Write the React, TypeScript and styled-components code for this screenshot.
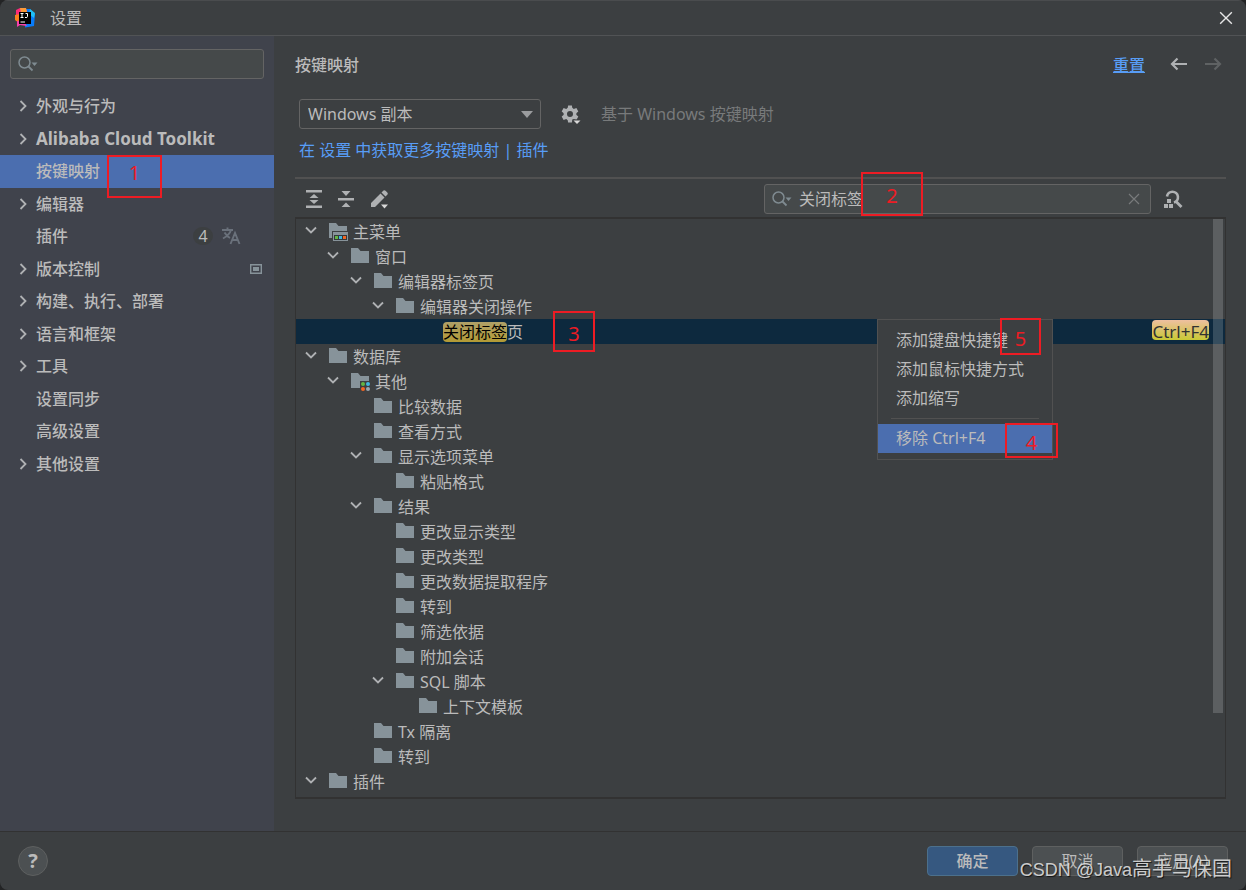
import React from "react";
import styled, { createGlobalStyle, css } from "styled-components";

const color = {
  panel: "#3c3f41",
  sidebar: "#40434c",
  text: "#bbbbbb",
  muted: "#787a7b",
  link: "#589df6",
  selection: "#4b6eaf",
  rowSelection: "#0d293e",
  field: "#45494a",
  fieldBorder: "#646464",
  line: "#323232",
  mark: "#ed1c24",
  folder: "#87939a",
  icon: "#afb1b3",
};

const GlobalStyle = createGlobalStyle`
  *, *::before, *::after { box-sizing: border-box; }
  body { margin: 0; background: #232425; }
  body, button, input, select {
    font-family: "Noto Sans", "Noto Sans CJK SC", sans-serif;
    font-size: 16px;
    line-height: 24px;
    color: ${color.text};
  }
  ul { list-style: none; margin: 0; padding: 0; }
`;

const Window = styled.div`
  position: relative;
  display: flex;
  flex-direction: column;
  min-height: 100vh;
  background: ${color.panel};
  border-radius: 8px;
  overflow: hidden;
`;

const TitleBar = styled.header`
  display: flex;
  align-items: center;
  gap: 15px;
  height: 36px;
  padding: 0 13px 0 15px;
  border-top: 1px solid #4a4c4e;
  border-bottom: 1px solid #515355;
`;

const TitleText = styled.span`
  flex: 1;
`;

const IconButton = styled.button`
  display: flex;
  align-items: center;
  justify-content: center;
  flex: none;
  padding: 0;
  border: 0;
  background: none;
`;

const Body = styled.div`
  display: flex;
  flex: 1;
`;

const Sidebar = styled.nav`
  flex: none;
  width: 274px;
  padding-top: 13px;
  background: ${color.sidebar};
`;

const SearchBox = styled.label<{ $inset?: boolean }>`
  position: relative;
  display: flex;
  align-items: center;
  height: 30px;
  padding: 0 ${(p) => (p.$inset ? 8 : 10)}px 0 6px;
  border: 1px solid ${color.fieldBorder};
  border-radius: 3px;
  background: ${color.field};
  ${(p) =>
    p.$inset
      ? css`
          margin: 0 10px 11px;
        `
      : css`
          width: 387px;
        `}
`;

const SearchInput = styled.input`
  flex: 1;
  min-width: 0;
  height: 24px;
  padding: 0 0 0 6px;
  border: 0;
  outline: 0;
  background: none;
`;

const Categories = styled.ul`
  display: grid;
  grid-template-rows: repeat(12, 1fr);
  height: 390px;
`;

const Category = styled.li<{ $selected?: boolean }>`
  position: relative;
  display: flex;
  align-items: center;
  padding: 0 12px 0 16px;
  font-weight: 500;
  background: ${(p) => (p.$selected ? color.selection : "none")};
`;

const ArrowSlot = styled.span`
  display: flex;
  flex: none;
  width: 20px;
`;

const CategoryName = styled.span<{ $bold?: boolean }>`
  flex: 1;
  font-size: ${(p) => (p.$bold ? 17 : 16)}px;
  font-weight: ${(p) => (p.$bold ? 700 : 500)};
`;

const CountBadge = styled.span`
  display: flex;
  align-items: center;
  justify-content: center;
  width: 20px;
  height: 18px;
  margin-right: 8px;
  border-radius: 9px;
  background: ${color.panel};
  font-weight: 400;
`;

const TranslateSlot = styled.span`
  display: flex;
  margin-right: 21px;
`;

const Main = styled.main`
  display: flex;
  flex: 1;
  flex-direction: column;
  min-width: 0;
  padding: 16px 20px 32px 21px;
`;

const HeadingRow = styled.div`
  display: flex;
  align-items: center;
  height: 26px;
`;

const Heading = styled.h1`
  flex: 1;
  margin: 0;
  font-size: 16px;
  font-weight: 500;
`;

const ResetLink = styled.a`
  color: ${color.link};
  font-weight: 500;
  margin-right: 24px;
`;

const HistoryButtons = styled.div`
  display: flex;
  gap: 14px;
  margin-right: 3px;
  padding-bottom: 2px;
`;

const SchemeRow = styled.div`
  display: flex;
  align-items: center;
  gap: 20px;
  margin: 21px 0 9px 4px;
`;

const SelectWrap = styled.div`
  position: relative;
  width: 242px;
  height: 30px;
`;

const SchemeSelect = styled.select`
  appearance: none;
  width: 100%;
  height: 100%;
  padding: 0 28px 0 8px;
  border: 1px solid ${color.fieldBorder};
  border-radius: 3px;
  background: ${color.panel};
`;

const SelectArrow = styled.svg`
  position: absolute;
  right: 8px;
  top: 12px;
  pointer-events: none;
`;

const SchemeNote = styled.span`
  color: ${color.muted};
`;

const LinkRow = styled.div`
  margin-left: 4px;
  color: ${color.link};
`;

const Link = styled.a`
  color: ${color.link};
  text-decoration: none;
`;

const Toolbar = styled.div`
  display: flex;
  align-items: center;
  gap: 12px;
  height: 40px;
  margin-top: 15px;
  padding: 2px 43px 0 9px;
  border-top: 2px solid #515151;
`;

const ToolbarActions = styled.div`
  display: flex;
  flex: 1;
  gap: 12px;
`;

const TreePanel = styled.div`
  position: relative;
  flex: 1;
  border: 1px solid #323232;
  border-top-width: 2px;
  border-bottom-width: 2px;
`;

const indents = [0, 22, 45, 67, 90];

const TreeRow = styled.li<{ $level: number; $selected?: boolean }>`
  position: relative;
  display: flex;
  align-items: center;
  height: 25px;
  padding-left: ${(p) => 9 + indents[p.$level]}px;
  padding-right: 16px;
  background: ${(p) => (p.$selected ? color.rowSelection : "none")};
`;

const TreeArrow = styled.span`
  display: flex;
  width: 23px;
  padding-bottom: 3px;
`;

const TreeIcon = styled.span`
  display: flex;
  width: 25px;
  padding-bottom: 1px;
`;

const TreeLabel = styled.span<{ $bare?: boolean }>`
  flex: 1;
  white-space: nowrap;
  margin-left: ${(p) => (p.$bare ? 25 : 0)}px;
`;

const Match = styled.mark`
  display: inline-block;
  height: 20px;
  line-height: 20px;
  color: #000;
  border-radius: 4px;
  background: linear-gradient(#aea068, #b39a35);
`;

const Shortcut = styled.kbd`
  height: 20px;
  margin-bottom: 3px;
  line-height: 23px;
  font-family: inherit;
  font-size: 17px;
  color: #323232;
  border-radius: 4px;
  background: linear-gradient(#eebfa0, #c8c834);
`;

const ScrollThumb = styled.div`
  position: absolute;
  top: 0;
  right: 2px;
  width: 10px;
  height: 494px;
  background: rgba(255, 255, 255, 0.17);
`;

const ContextMenu = styled.ul`
  position: absolute;
  z-index: 2;
  top: 0;
  right: 172px;
  width: 176px;
  padding: 6px 0;
  border: 1px solid #515151;
  background: ${color.panel};
`;

const MenuItem = styled.li<{ $selected?: boolean }>`
  position: relative;
  background: ${(p) => (p.$selected ? color.selection : "none")};
`;

const MenuButton = styled.button`
  display: block;
  width: 100%;
  height: 29px;
  padding: 0 0 2px 18px;
  border: 0;
  background: none;
  text-align: left;
  white-space: nowrap;
`;

const MenuDivider = styled.li`
  height: 1px;
  margin: 5px 13px;
  background: #515151;
`;

const Mark = styled.span<{ $x: number; $y: number; $w: number; $h: number }>`
  position: absolute;
  z-index: 3;
  left: ${(p) => p.$x}px;
  top: ${(p) => p.$y}px;
  width: ${(p) => p.$w}px;
  height: ${(p) => p.$h}px;
  display: flex;
  align-items: center;
  justify-content: center;
  border: 2px solid ${color.mark};
  color: ${color.mark};
  font-size: 20px;
  font-weight: 400;
  pointer-events: none;
`;

const MarkDigit = styled.span<{ $raised?: boolean }>`
  margin-bottom: ${(p) => (p.$raised ? 8 : 0)}px;
  margin-top: ${(p) => (p.$raised ? 0 : 4)}px;
`;

const Footer = styled.footer`
  display: flex;
  align-items: center;
  gap: 14px;
  height: 59px;
  padding: 0 18px;
  border-top: 1px solid #323232;
`;

const HelpButton = styled.button`
  width: 30px;
  height: 30px;
  margin-right: auto;
  padding: 0;
  border: 1px solid #5e6060;
  border-radius: 50%;
  background: #4c5052;
  font-size: 20px;
  font-weight: 700;
`;

const DialogButton = styled.button<{ $primary?: boolean }>`
  width: 91px;
  height: 30px;
  padding: 0;
  border: 1px solid ${(p) => (p.$primary ? "#4c708c" : "#5e6060")};
  border-radius: 4px;
  background: ${(p) => (p.$primary ? "#365880" : "#4c5052")};
  font-weight: ${(p) => (p.$primary ? 500 : 400)};
`;

const Watermark = styled.span`
  position: absolute;
  right: 14px;
  bottom: 8px;
  font-family: "Liberation Sans", "Noto Sans CJK SC", sans-serif;
  font-size: 20px;
  color: rgba(225, 225, 225, 0.9);
  text-shadow: 1px 1px 1px rgba(0, 0, 0, 0.7);
  pointer-events: none;
`;

const WatermarkLatin = styled.span`
  font-size: 18px;
`;

const AppLogo = () => (
  <svg width="20" height="20" viewBox="0 0 20 20" aria-hidden="true">
    <path d="M11 1l4 0 5 5-1 12-9 1.500 0-9z" fill="#087cfa" />
    <path d="M15 1l5 4-1 5-5-4z" fill="#20c0f5" />
    <path d="M1 2l4-2 7 2-3 8-8-2z" fill="#fe2a78" />
    <path d="M5 0l6 0 1 4-6 1z" fill="#fc9a38" />
    <path d="M0 7l5-1 3 6-4 3-4-3z" fill="#fc801d" />
    <path d="M2 13l6-1 4 6-7-1-3 2z" fill="#f83faa" />
    <rect x="4" y="4" width="12" height="12" fill="#000" />
    <path d="M5.500 5.500h3M7 5.500v4M5.500 9.500h3M12.500 5.500v3q0 1.500-2.500 1M10.500 5.500h2" stroke="#fff" strokeWidth="1" fill="none" />
    <path d="M5.500 14h4.500" stroke="#fff" strokeWidth="1" />
  </svg>
);

const CloseIcon = ({ size, stroke }: { size: number; stroke: string }) => (
  <svg width={size} height={size} viewBox="0 0 12 12" aria-hidden="true">
    <path d="M1 1l10 10M11 1L1 11" stroke={stroke} strokeWidth="1.200" />
  </svg>
);

const SearchIcon = () => (
  <svg width="22" height="20" viewBox="0 0 22 20" aria-hidden="true">
    <circle cx="7.500" cy="8.500" r="5.500" fill="none" stroke="#7f8b91" strokeWidth="1.500" />
    <path d="M11.500 12.500l4 4" stroke="#7f8b91" strokeWidth="1.800" />
    <path d="M14.500 8.500h6l-3 3.500z" fill="#7f8b91" />
  </svg>
);

const ChevronRight = () => (
  <svg width="14" height="14" viewBox="0 0 14 14" aria-hidden="true">
    <path d="M4.500 2l5 5-5 5" fill="none" stroke={color.icon} strokeWidth="1.800" />
  </svg>
);

const ChevronDown = () => (
  <svg width="12" height="12" viewBox="0 0 12 12" aria-hidden="true">
    <path d="M1 3.500l5 5 5-5" fill="none" stroke={color.icon} strokeWidth="1.800" />
  </svg>
);

type FolderKind = "plain" | "menu" | "group";

const FolderIcon = ({ kind }: { kind: FolderKind }) => (
  <svg width="20" height="20" viewBox="0 0 20 20" aria-hidden="true">
    {kind === "plain" && <path d="M1 2h7l2.500 3H19v12H1z" fill={color.folder} />}
    {kind === "menu" && (
      <>
        <path d="M1 2h7l2.500 3H19v5H4v7H1z" fill={color.folder} />
        <path d="M5 11h15v9H5z" fill={color.folder} />
        <path d="M6 14h13v5H6z" fill="#33383b" />
        <rect x="7" y="15" width="3" height="3" fill="#62b543" />
        <rect x="11" y="15" width="3" height="3" fill="#40b6e0" />
        <rect x="15" y="15" width="3" height="3" fill="#f26522" />
      </>
    )}
    {kind === "group" && (
      <>
        <path d="M1 2h7l2.500 3H19v5h-9v7H1z" fill={color.folder} />
        <circle cx="13" cy="13" r="2" fill="#62b543" />
        <circle cx="18" cy="13" r="2" fill="#40b6e0" />
        <circle cx="13" cy="18" r="2" fill="#f26522" />
        <circle cx="18" cy="18" r="2" fill="#9aa7b0" />
      </>
    )}
  </svg>
);

const ArrowIcon = ({ right }: { right?: boolean }) => (
  <svg width="20" height="20" viewBox="0 0 20 20" aria-hidden="true">
    <path
      d={right ? "M2 10h15M11.500 4.500l5.500 5.500-5.500 5.500" : "M18 10H3M8.500 4.500L3 10l5.500 5.500"}
      fill="none"
      stroke={right ? "#5f6263" : color.icon}
      strokeWidth="2.200"
    />
  </svg>
);

const GearIcon = () => (
  <svg width="20" height="20" viewBox="0 0 20 20" aria-hidden="true">
    <circle cx="9" cy="10" r="4.700" fill="none" stroke={color.icon} strokeWidth="3.400" />
    {[0, 60, 120].map((a) => (
      <path
        key={a}
        d="M6.500 5l.6-3.500h3.800l.6 3.500zM6.500 15l.6 3.500h3.800l.6-3.500z"
        fill={color.icon}
        transform={`rotate(${a} 9 10)`}
      />
    ))}
    <path d="M11 15.500h9V20h-6z" fill={color.panel} />
    <path d="M12.500 16.500h7l-3.500 3.500z" fill="#d8d8d8" />
  </svg>
);

const ExpandIcon = () => (
  <svg width="20" height="20" viewBox="0 0 20 20" aria-hidden="true">
    <path d="M2 1h16v2.500H2zM2 16.500h16V19H2zM10 5l4.500 4h-9zM10 15l4.500-4h-9z" fill={color.icon} />
  </svg>
);

const CollapseIcon = () => (
  <svg width="20" height="20" viewBox="0 0 20 20" aria-hidden="true">
    <path d="M2 9h16v2.500H2zM10 7l4.500-5h-9zM10 13.500l4.500 4.500h-9z" fill={color.icon} />
  </svg>
);

const EditIcon = () => (
  <svg width="22" height="20" viewBox="0 0 22 20" aria-hidden="true">
    <path d="M3 14L12.500 4.500l4 4L7 18H3zM13.500 3.500l2-2q1-.8 2 .2l1.800 1.800q1 1 .2 2l-2 2z" fill={color.icon} />
    <path d="M10.500 15H20l-4.800 5z" fill={color.panel} />
    <path d="M13 15.500h7l-3.500 4z" fill="#d8d8d8" />
  </svg>
);

const FindShortcutIcon = () => (
  <svg width="20" height="20" viewBox="0 0 20 20" aria-hidden="true">
    <path d="M4 7.500a5.500 5.500 0 1 1 7 6" fill="none" stroke={color.icon} strokeWidth="2.600" />
    <path d="M12.500 12l6 6" stroke={color.icon} strokeWidth="2.800" />
    <path d="M4 10h4v4H4zM1 15h4v4H1zM6 15h4v4H6z" fill={color.icon} />
  </svg>
);

const TranslateIcon = () => (
  <svg width="20" height="20" viewBox="0 0 20 20" aria-hidden="true">
    <path
      d="M1 4h11M6.500 1.500V4M10 4Q8.500 9 2 12.500M3.500 6.500Q6 10.500 9 12M9.500 18l4.500-11 4.500 11M11 14h6"
      fill="none"
      stroke="#6a717b"
      strokeWidth="1.900"
    />
  </svg>
);

const ProjectIcon = () => (
  <svg width="12" height="10" viewBox="0 0 12 10" aria-hidden="true">
    <path d="M.7.700h10.600v8.600H.7z" fill="none" stroke="#87939a" strokeWidth="1.400" />
    <path d="M3 3h6v4H3z" fill="#87939a" />
  </svg>
);

type CategoryData = { name: string; leaf?: boolean; bold?: boolean; selected?: boolean; plugins?: boolean; project?: boolean };

const categories: CategoryData[] = [
  { name: "外观与行为" },
  { name: "Alibaba Cloud Toolkit", bold: true },
  { name: "按键映射", leaf: true, selected: true },
  { name: "编辑器" },
  { name: "插件", leaf: true, plugins: true },
  { name: "版本控制", project: true },
  { name: "构建、执行、部署" },
  { name: "语言和框架" },
  { name: "工具" },
  { name: "设置同步", leaf: true },
  { name: "高级设置", leaf: true },
  { name: "其他设置" },
];

type Node = { name: string; level: number; open?: boolean; kind?: FolderKind };

const before: Node[] = [
  { name: "主菜单", level: 0, open: true, kind: "menu" },
  { name: "窗口", level: 1, open: true },
  { name: "编辑器标签页", level: 2, open: true },
  { name: "编辑器关闭操作", level: 3, open: true },
];

const after: Node[] = [
  { name: "数据库", level: 0, open: true },
  { name: "其他", level: 1, open: true, kind: "group" },
  { name: "比较数据", level: 2 },
  { name: "查看方式", level: 2 },
  { name: "显示选项菜单", level: 2, open: true },
  { name: "粘贴格式", level: 3 },
  { name: "结果", level: 2, open: true },
  { name: "更改显示类型", level: 3 },
  { name: "更改类型", level: 3 },
  { name: "更改数据提取程序", level: 3 },
  { name: "转到", level: 3 },
  { name: "筛选依据", level: 3 },
  { name: "附加会话", level: 3 },
  { name: "SQL 脚本", level: 3, open: true },
  { name: "上下文模板", level: 4 },
  { name: "Tx 隔离", level: 2 },
  { name: "转到", level: 2 },
  { name: "插件", level: 0, open: true },
];

const TreeNode = ({ node }: { node: Node }) => (
  <TreeRow $level={node.level} role="treeitem" aria-expanded={node.open}>
    <TreeArrow>{node.open && <ChevronDown />}</TreeArrow>
    <TreeIcon>
      <FolderIcon kind={node.kind ?? "plain"} />
    </TreeIcon>
    <TreeLabel>{node.name}</TreeLabel>
  </TreeRow>
);

export default function App() {
  return (
    <>
      <GlobalStyle />
      <Window>
        <TitleBar>
          <AppLogo />
          <TitleText>设置</TitleText>
          <IconButton aria-label="关闭">
            <CloseIcon size={14} stroke="#e6e6e6" />
          </IconButton>
        </TitleBar>
        <Body>
          <Sidebar>
            <SearchBox $inset>
              <SearchIcon />
              <SearchInput type="text" aria-label="搜索设置" />
            </SearchBox>
            <Categories>
              {categories.map((c) => (
                <Category key={c.name} $selected={c.selected}>
                  <ArrowSlot>{!c.leaf && <ChevronRight />}</ArrowSlot>
                  <CategoryName $bold={c.bold}>{c.name}</CategoryName>
                  {c.plugins && (
                    <>
                      <CountBadge>4</CountBadge>
                      <TranslateSlot>
                        <TranslateIcon />
                      </TranslateSlot>
                    </>
                  )}
                  {c.project && <ProjectIcon />}
                  {c.selected && (
                    <Mark $x={107} $y={0} $w={55} $h={43}>
                      <MarkDigit $raised>1</MarkDigit>
                    </Mark>
                  )}
                </Category>
              ))}
            </Categories>
          </Sidebar>
          <Main>
            <HeadingRow>
              <Heading>按键映射</Heading>
              <ResetLink href="#reset">重置</ResetLink>
              <HistoryButtons>
                <IconButton aria-label="后退">
                  <ArrowIcon />
                </IconButton>
                <IconButton aria-label="前进" disabled>
                  <ArrowIcon right />
                </IconButton>
              </HistoryButtons>
            </HeadingRow>
            <SchemeRow>
              <SelectWrap>
                <SchemeSelect aria-label="按键映射方案" defaultValue="copy">
                  <option value="copy">Windows 副本</option>
                </SchemeSelect>
                <SelectArrow width="12" height="8" viewBox="0 0 12 8">
                  <path d="M0 0h12L6 7z" fill="#9a9c9e" />
                </SelectArrow>
              </SelectWrap>
              <IconButton aria-label="方案操作">
                <GearIcon />
              </IconButton>
              <SchemeNote>基于 Windows 按键映射</SchemeNote>
            </SchemeRow>
            <LinkRow>
              <Link href="#more">在 设置 中获取更多按键映射</Link> | <Link href="#plugins">插件</Link>
            </LinkRow>
            <Toolbar>
              <ToolbarActions>
                <IconButton aria-label="全部展开">
                  <ExpandIcon />
                </IconButton>
                <IconButton aria-label="全部折叠">
                  <CollapseIcon />
                </IconButton>
                <IconButton aria-label="编辑快捷键">
                  <EditIcon />
                </IconButton>
              </ToolbarActions>
              <SearchBox>
                <SearchIcon />
                <SearchInput type="text" aria-label="搜索操作" defaultValue="关闭标签" />
                <IconButton aria-label="清除">
                  <CloseIcon size={12} stroke="#787a7b" />
                </IconButton>
                <Mark $x={96} $y={-13} $w={62} $h={44}>
                  <MarkDigit>2</MarkDigit>
                </Mark>
              </SearchBox>
              <IconButton aria-label="按快捷键查找">
                <FindShortcutIcon />
              </IconButton>
            </Toolbar>
            <TreePanel>
              <ul role="tree">
                {before.map((n, i) => (
                  <TreeNode key={i} node={n} />
                ))}
                <TreeRow $level={4} $selected role="treeitem">
                  <TreeArrow />
                  <TreeLabel $bare>
                    <Match>关闭标签</Match>页
                  </TreeLabel>
                  <Shortcut>Ctrl+F4</Shortcut>
                  <Mark $x={257} $y={-8} $w={42} $h={41}>
                    <MarkDigit>3</MarkDigit>
                  </Mark>
                  <ContextMenu>
                    <MenuItem>
                      <MenuButton>添加键盘快捷键</MenuButton>
                      <Mark $x={122} $y={-8} $w={41} $h={37}>
                        <MarkDigit>5</MarkDigit>
                      </Mark>
                    </MenuItem>
                    <MenuItem>
                      <MenuButton>添加鼠标快捷方式</MenuButton>
                    </MenuItem>
                    <MenuItem>
                      <MenuButton>添加缩写</MenuButton>
                    </MenuItem>
                    <MenuDivider role="separator" />
                    <MenuItem $selected>
                      <MenuButton>移除 Ctrl+F4</MenuButton>
                      <Mark $x={127} $y={-1} $w={53} $h={35}>
                        <MarkDigit>4</MarkDigit>
                      </Mark>
                    </MenuItem>
                  </ContextMenu>
                </TreeRow>
                {after.map((n, i) => (
                  <TreeNode key={i} node={n} />
                ))}
              </ul>
              <ScrollThumb />
            </TreePanel>
          </Main>
        </Body>
        <Footer>
          <HelpButton aria-label="帮助">?</HelpButton>
          <DialogButton $primary>确定</DialogButton>
          <DialogButton>取消</DialogButton>
          <DialogButton>应用(A)</DialogButton>
        </Footer>
        <Watermark>
          <WatermarkLatin>CSDN @Java</WatermarkLatin>高手马保国
        </Watermark>
      </Window>
    </>
  );
}
